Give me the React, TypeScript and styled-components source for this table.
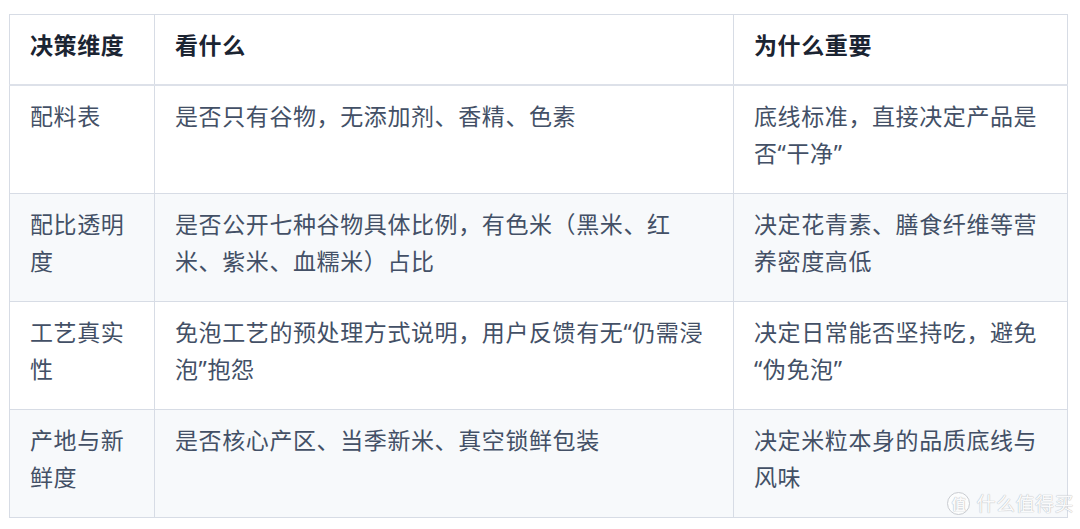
import React from 'react';
import styled, { createGlobalStyle } from 'styled-components';

const GlobalStyle = createGlobalStyle`
  html, body {
    margin: 0;
    padding: 0;
    background: #ffffff;
  }
  body {
    font-family: "Noto Sans", "Noto Sans CJK SC", sans-serif;
  }
`;

const Page = styled.div`
  position: relative;
  width: 1080px;
  height: 529px;
  padding: 14px 0 0 9px;
  box-sizing: border-box;
  overflow: hidden;
`;

const Table = styled.table`
  width: 1058px;
  border-collapse: collapse;
  table-layout: fixed;
  font-size: 23px;
  letter-spacing: 0.6px;
  line-height: 37px;
`;

const HeadCell = styled.th`
  text-align: left;
  vertical-align: top;
  font-weight: 700;
  color: #1b2432;
  padding: 12px 20px 20px;
  border: 1px solid #d7dce5;
  border-bottom: 2px solid #dde1e9;
`;

const Row = styled.tr<{ $striped?: boolean }>`
  background: ${(p) => (p.$striped ? '#f7f9fb' : '#ffffff')};
`;

const Cell = styled.td`
  vertical-align: top;
  color: #435066;
  padding: 12px 20px 21px;
  border: 1px solid #d7dce5;
`;

const Watermark = styled.div`
  position: absolute;
  right: 6px;
  bottom: 12px;
  display: flex;
  align-items: center;
  gap: 6px;
  color: rgba(255, 255, 255, 0.95);
  font-size: 19px;
  letter-spacing: 0.5px;
  text-shadow: 0 0 1px #b9bcc2, 0 0 1px #b9bcc2;
`;

const Badge = styled.span`
  display: flex;
  align-items: center;
  justify-content: center;
  width: 21px;
  height: 21px;
  border-radius: 50%;
  border: 1.5px solid #c9ccd1;
  background: rgba(255, 255, 255, 0.6);
  font-size: 14px;
  font-weight: 700;
`;

// \u200B lets the line break before an opening quote, as in the original
const rows = [
  ['配料表', '是否只有谷物，无添加剂、香精、色素', '底线标准，直接决定产品是否“干净”'],
  ['配比透明度', '是否公开七种谷物具体比例，有色米（黑米、红米、紫米、血糯米）占比', '决定花青素、膳食纤维等营养密度高低'],
  ['工艺真实性', '免泡工艺的预处理方式说明，用户反馈有无“仍需浸泡”抱怨', '决定日常能否坚持吃，避免\u200B“伪免泡”'],
  ['产地与新鲜度', '是否核心产区、当季新米、真空锁鲜包装', '决定米粒本身的品质底线与风味'],
];

const App: React.FC = () => (
  <>
    <GlobalStyle />
    <Page>
      <Table>
        <colgroup>
          <col style={{ width: 145 }} />
          <col style={{ width: 579 }} />
          <col style={{ width: 334 }} />
        </colgroup>
        <thead>
          <tr>
            <HeadCell>决策维度</HeadCell>
            <HeadCell>看什么</HeadCell>
            <HeadCell>为什么重要</HeadCell>
          </tr>
        </thead>
        <tbody>
          {rows.map((r, i) => (
            <Row key={r[0]} $striped={i % 2 === 1}>
              <Cell>{r[0]}</Cell>
              <Cell>{r[1]}</Cell>
              <Cell>{r[2]}</Cell>
            </Row>
          ))}
        </tbody>
      </Table>
      <Watermark>
        <Badge>值</Badge>
        <span>什么值得买</span>
      </Watermark>
    </Page>
  </>
);

export default App;
